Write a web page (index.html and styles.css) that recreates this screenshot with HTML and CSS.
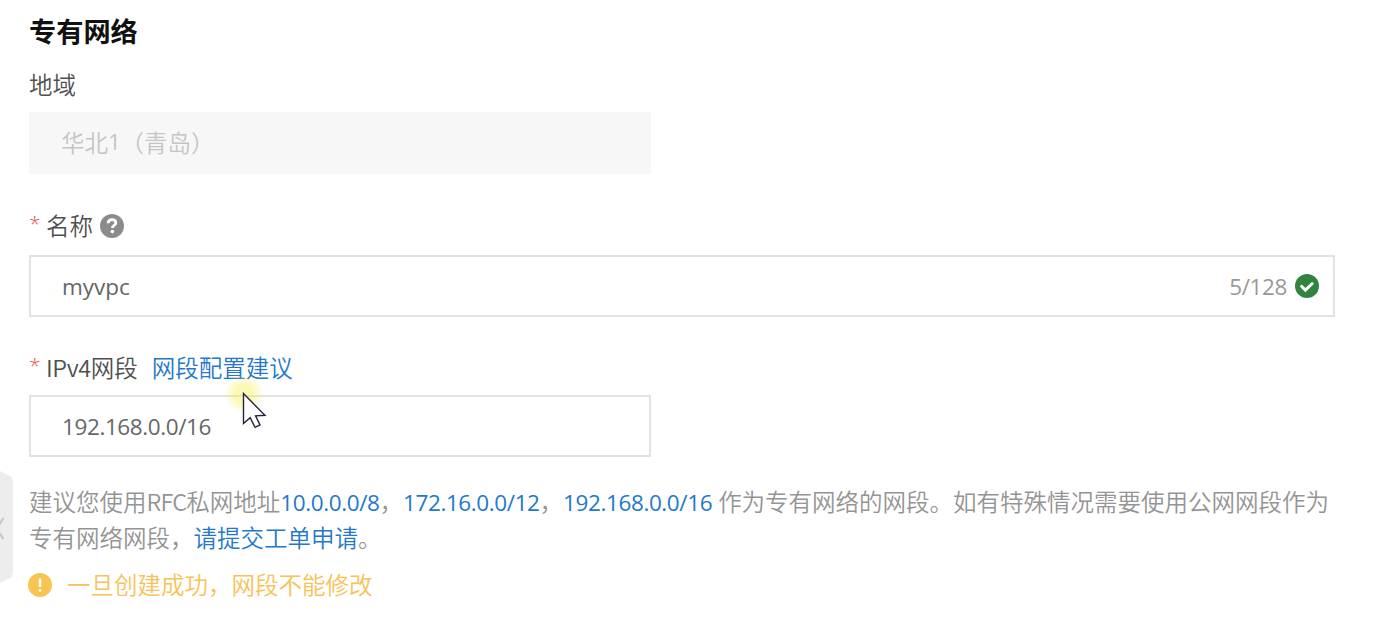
FILE: index.html
```
<!DOCTYPE html>
<html lang="zh-CN">
<head>
  <meta charset="UTF-8">
  <meta name="viewport" content="width=device-width, initial-scale=1.0">
  <title>专有网络</title>
  <link rel="stylesheet" href="styles.css">
</head>
<body>
  <div class="container">
    <h2>专有网络</h2>

    <div class="form-group region">
      <div class="label">地域</div>
      <div class="field field-half disabled">华北<span class="latin">1</span>（青岛）</div>
    </div>

    <div class="form-group">
      <div class="label label-name">
        <span class="required">*</span>
        <span>名称</span>
        <svg class="icon help" viewBox="0 0 24 24">
          <circle cx="12" cy="12" r="12" fill="#8c8c8c"/>
          <path d="M8.2 9.3c0-2.3 1.6-3.6 3.8-3.6s3.8 1.2 3.8 3.2c0 2.5-3.4 2.6-3.4 5.2" fill="none" stroke="#fff" stroke-width="2.8"/>
          <circle cx="12.4" cy="17.6" r="1.8" fill="#fff"/>
        </svg>
      </div>
      <div class="field">
        <span class="latin name">myvpc</span>
        <span class="latin count">5/128</span>
        <svg class="icon" viewBox="0 0 24 24">
          <circle cx="12" cy="12" r="12" fill="#32833f"/>
          <path d="M5.8 11.5l4.6 4.6 7.7-7.4" fill="none" stroke="#fff" stroke-width="2.9"/>
        </svg>
      </div>
    </div>

    <div class="form-group">
      <div class="label">
        <span class="required">*</span>
        <span><span class="ipv">IPv4</span>网段</span>
        <a class="advice">网段配置建议</a>
      </div>
      <div class="field field-half"><span class="latin">192.168.0.0/16</span></div>
    </div>

    <!-- 网段说明 -->
    <p class="hint">建议您使用<span class="rfc">RFC</span>私网地址<a class="latin">10.0.0.0/8</a>，<a class="latin">172.16.0.0/12</a>，<a class="latin">192.168.0.0/16</a><span class="space"></span>作为专有网络的网段。如有特殊情况需要使用公网网段作为<br>专有网络网段，<a>请提交工单申请</a>。</p>

    <div class="warning">
      <svg class="icon" viewBox="0 0 24 24">
        <circle cx="12" cy="12" r="12" fill="#f9c552"/>
        <path d="M12 5.5v8.5M12 16.2v2.6" stroke="#fff" stroke-width="2.4"/>
      </svg>
      <span>一旦创建成功，网段不能修改</span>
    </div>
  </div>

  <!-- 侧边收起按钮 -->
  <svg class="collapse" viewBox="0 0 13 112">
    <path d="M0 0l10 5q3 2 3 5v91q0 4-3 6l-10 5z" fill="#ededed"/>
    <path d="M3.5 47l-7 11 7 10" fill="none" stroke="#c4c4c4" stroke-width="2"/>
  </svg>

  <div class="glow"></div>
  <svg class="cursor" viewBox="0 0 26 38">
    <path d="M1.5 1.5v30l6.7-5.8 4.8 9.6 5-2.4-4.4-9 9.4-.6z" fill="#fff" stroke="#26233c" stroke-width="1.4"/>
  </svg>
</body>
</html>
```
FILE: styles.css
```
* {
  box-sizing: border-box;
}

body {
  background-color: #ffffff;
  font-family: "Noto Sans CJK SC", sans-serif;
  font-size: 23.5px;
  font-weight: 350;
  color: #505050;
  margin: 0;
  height: 628px;
  position: relative;
  overflow: hidden;
}

.container {
  width: 1306px;
  margin-left: 29px;
  padding-top: 10px;
}

h2 {
  color: #111;
  font-size: 27.2px;
  font-weight: 700;
  line-height: 40px;
  margin: 0 0 14px 0;
}

.form-group {
  margin-bottom: 30px;
}

.label {
  display: flex;
  align-items: center;
  height: 40px;
  margin-bottom: 8px;
  line-height: 40px;
  white-space: nowrap;
}

.label-name {
  margin-bottom: 10px;
}

.region {
  margin-bottom: 31px;
}

.required {
  width: 17px;
  color: #e5534b;
  font-family: "Open Sans", sans-serif;
  font-size: 21px;
  line-height: 36px;
  align-self: flex-start;
}

.icon {
  width: 24px;
  height: 24px;
  flex: none;
}

.help {
  margin: 2px 0 0 7px;
}

.ipv {
  letter-spacing: -0.4px;
}

.advice {
  margin-left: 14px;
}

a {
  color: #2478cc;
}

.latin {
  font-family: "Open Sans", sans-serif;
  font-size: 22.5px;
  font-weight: 400;
  letter-spacing: -0.4px;
}

.field {
  display: flex;
  align-items: center;
  height: 62px;
  padding: 0 14px 0 31px;
  border: 2px solid #e2e2e2;
  color: #666;
}

.field-half {
  width: 622px;
}

.disabled {
  background-color: #f7f7f7;
  border-color: #f7f7f7;
  color: #c5c5c5;
  padding: 0 0 3px 30px;
}

.name {
  flex: 1;
  letter-spacing: 0;
}

.count {
  color: #999;
  margin-right: 8px;
}

.hint {
  margin: -3px 0 0;
  color: #949494;
  line-height: 35px;
  white-space: nowrap;
}

.rfc {
  letter-spacing: -0.8px;
}

.space {
  display: inline-block;
  width: 6px;
}

.warning {
  display: flex;
  align-items: center;
  gap: 15px;
  height: 36px;
  margin: 12px 0 0 -1px;
  color: #f7c256;
}

.warning span {
  margin-top: -3px;
}

.collapse {
  position: absolute;
  left: 0;
  top: 471px;
  width: 13px;
  height: 112px;
}

.glow {
  position: absolute;
  left: 224px;
  top: 374px;
  width: 40px;
  height: 40px;
  border-radius: 50%;
  background: radial-gradient(circle, rgba(246, 240, 90, 0.45) 30%, rgba(246, 240, 90, 0) 70%);
}

.cursor {
  position: absolute;
  left: 242px;
  top: 392px;
  width: 26px;
  height: 38px;
}
```
